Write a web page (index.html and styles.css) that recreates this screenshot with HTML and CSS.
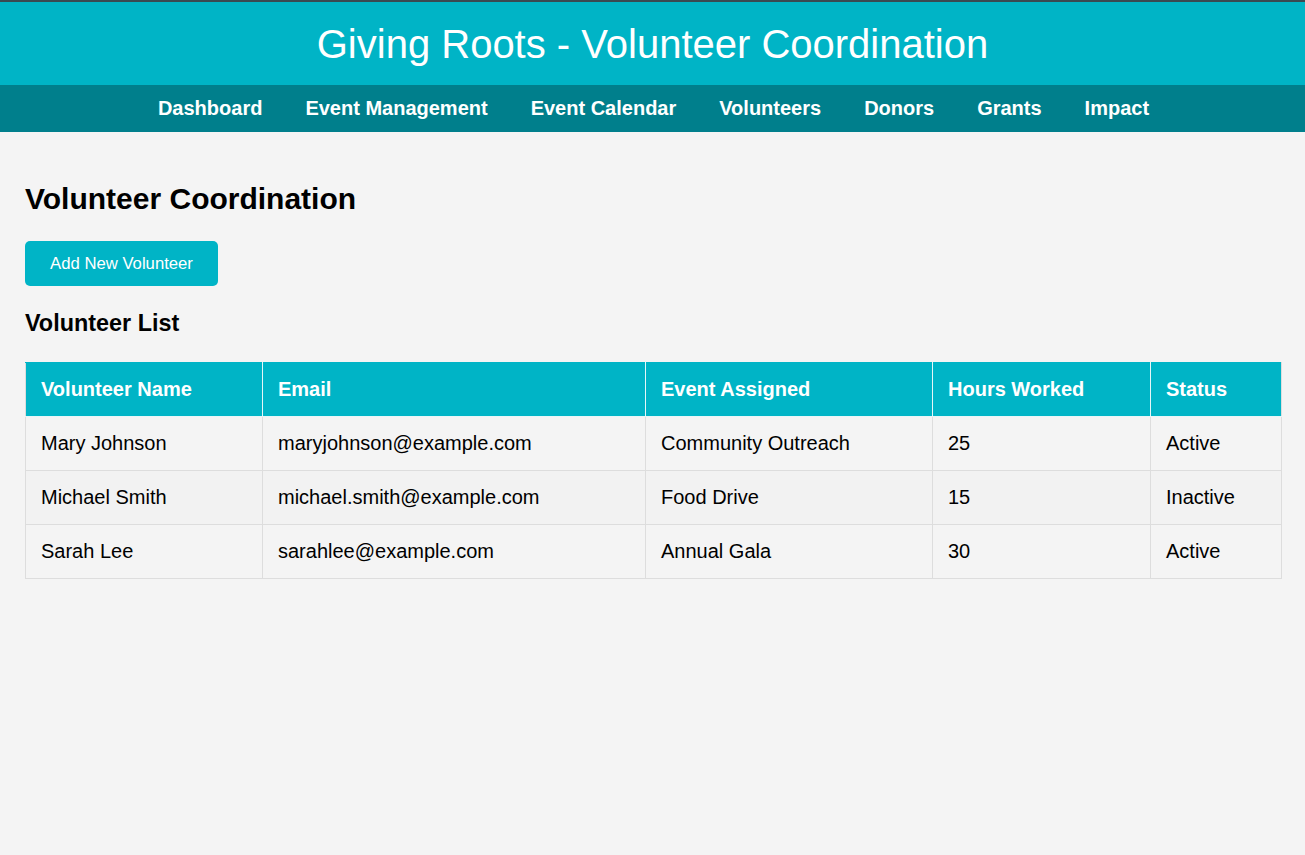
FILE: index.html
```html
<!DOCTYPE html>
<html lang="en">
<head>
<meta charset="utf-8">
<title>Giving Roots - Volunteer Coordination</title>
<link rel="stylesheet" href="styles.css">
</head>
<body>
<header class="site-header">
  <h1 class="site-title">Giving Roots - Volunteer Coordination</h1>
</header>
<nav class="main-nav">
  <a href="#" class="nav-link">Dashboard</a>
  <a href="#" class="nav-link">Event Management</a>
  <a href="#" class="nav-link">Event Calendar</a>
  <a href="#" class="nav-link">Volunteers</a>
  <a href="#" class="nav-link">Donors</a>
  <a href="#" class="nav-link">Grants</a>
  <a href="#" class="nav-link">Impact</a>
</nav>
<main class="content">
  <h2 class="page-title">Volunteer Coordination</h2>
  <button class="btn-primary" type="button">Add New Volunteer</button>
  <h3 class="section-title">Volunteer List</h3>
  <table class="data-table">
    <colgroup>
      <col class="col-name">
      <col class="col-email">
      <col class="col-event">
      <col class="col-hours">
      <col class="col-status">
    </colgroup>
    <thead>
      <tr>
        <th>Volunteer Name</th>
        <th>Email</th>
        <th>Event Assigned</th>
        <th>Hours Worked</th>
        <th>Status</th>
      </tr>
    </thead>
    <tbody>
      <tr>
        <td>Mary Johnson</td>
        <td>maryjohnson@example.com</td>
        <td>Community Outreach</td>
        <td>25</td>
        <td>Active</td>
      </tr>
      <tr>
        <td>Michael Smith</td>
        <td>michael.smith@example.com</td>
        <td>Food Drive</td>
        <td>15</td>
        <td>Inactive</td>
      </tr>
      <tr>
        <td>Sarah Lee</td>
        <td>sarahlee@example.com</td>
        <td>Annual Gala</td>
        <td>30</td>
        <td>Active</td>
      </tr>
    </tbody>
  </table>
</main>
</body>
</html>
```
FILE: styles.css
```css
html, body {
  margin: 0;
  padding: 0;
}
body {
  font-family: "Liberation Sans", Arial, sans-serif;
  background: #f4f4f4;
  color: #000;
  border-top: 2px solid #3a4a52;
}
.site-header {
  background: #00b4c6;
  color: #fff;
  text-align: center;
  padding: 19px 20px 18px;
}
.site-title {
  margin: 0;
  font-size: 40px;
  font-weight: normal;
  line-height: 46px;
}
.main-nav {
  background: #007f8c;
  display: flex;
  justify-content: center;
  padding: 12px 0;
}
.nav-link {
  color: #fff;
  text-decoration: none;
  font-weight: bold;
  font-size: 20px;
  line-height: 23px;
  padding: 0 21.5px;
}
.nav-link:first-child {
  margin-left: 2px;
}
.content {
  padding: 25px;
}
.page-title {
  font-size: 30px;
  line-height: 34px;
  margin: 25px 0 25px;
}
.btn-primary {
  display: block;
  background: #00b4c6;
  color: #fff;
  border: none;
  border-radius: 5px;
  font-family: "Liberation Sans", Arial, sans-serif;
  font-size: 16.7px;
  line-height: 19px;
  padding: 13px 0;
  width: 193px;
  text-align: center;
  cursor: pointer;
}
.section-title {
  font-size: 23.4px;
  line-height: 27px;
  margin: 24px 0 25px;
}
.data-table {
  width: 100%;
  table-layout: fixed;
  border-collapse: collapse;
  font-size: 20px;
}
.data-table th,
.data-table td {
  border: 1px solid #dddddd;
  padding: 15px 15px;
  text-align: left;
  line-height: 23px;
}
.data-table th {
  background: #00b4c6;
  color: #fff;
  font-weight: bold;
  border-color: #e6f6f8;
  border-top-color: #00b4c6;
}
.data-table th:first-child {
  border-left-color: #dddddd;
}
.data-table th:last-child {
  border-right-color: #dddddd;
}
.data-table tbody tr:nth-child(even) td {
  background: #f2f2f2;
}
.col-name { width: 237px; }
.col-email { width: 383px; }
.col-event { width: 287px; }
.col-hours { width: 218px; }
.col-status { width: 131px; }
```
